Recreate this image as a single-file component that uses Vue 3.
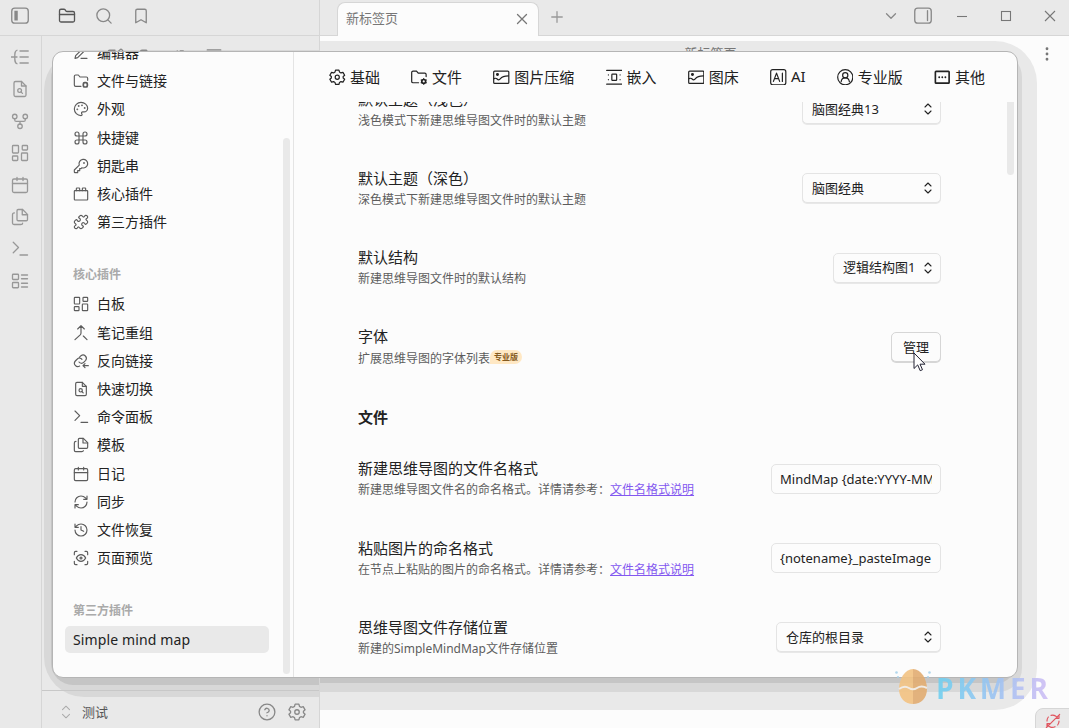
<template>
  <div class="app">
    <header class="titlebar">
      <div class="titlebar-left">
        <svg class="icon panel-icon" viewBox="0 0 24 24" v-html="icons.panelLeft"></svg>
        <svg class="icon active" viewBox="0 0 24 24" v-html="icons.folder"></svg>
        <svg class="icon" viewBox="0 0 24 24" v-html="icons.search"></svg>
        <svg class="icon" viewBox="0 0 24 24" v-html="icons.bookmark"></svg>
      </div>
      <div class="titlebar-tabs">
        <div class="tab">
          <span>新标签页</span>
          <svg class="icon" viewBox="0 0 24 24" v-html="icons.close"></svg>
        </div>
        <svg class="icon new-tab" viewBox="0 0 24 24" v-html="icons.plus"></svg>
        <div class="window-actions">
          <svg class="icon chevron" viewBox="0 0 24 24" v-html="icons.chevronDown"></svg>
          <svg class="icon panel-icon" viewBox="0 0 24 24" v-html="icons.panelRight"></svg>
          <svg class="win" viewBox="0 0 12 12"><path d="M1 6.500h10" /></svg>
          <svg class="win" viewBox="0 0 12 12"><rect x="1.500" y="1.500" width="9" height="9" /></svg>
          <svg class="win" viewBox="0 0 12 12"><path d="m1 1 10 10M11 1 1 11" /></svg>
        </div>
      </div>
    </header>

    <div class="workspace">
      <aside class="ribbon">
        <svg
          v-for="name in ribbonIcons"
          :key="name"
          class="icon"
          viewBox="0 0 24 24"
          v-html="icons[name]"
        ></svg>
      </aside>
      <section class="sidebar">
        <div class="shade shade-mid"></div>
        <div class="shade shade-dark"></div>
        <div class="sidebar-toolbar">
          <svg
            v-for="name in toolbarIcons"
            :key="name"
            class="icon"
            viewBox="0 0 24 24"
            v-html="icons[name]"
          ></svg>
        </div>
        <footer class="vault">
          <svg class="icon vault-switch" viewBox="0 0 24 24" v-html="icons.upDown"></svg>
          <span class="vault-name">测试</span>
          <svg class="icon" viewBox="0 0 24 24" v-html="icons.help"></svg>
          <svg class="icon" viewBox="0 0 24 24" v-html="icons.settings"></svg>
        </footer>
      </section>
      <main class="editor">
        <div class="shade shade-light"></div>
        <div class="shade shade-mid"></div>
        <div class="shade shade-dark"></div>
        <div class="view-title">新标签页</div>
        <svg class="icon more" viewBox="0 0 24 24" v-html="icons.more"></svg>
        <div class="status">
          <svg class="icon" viewBox="0 0 24 24" v-html="icons.syncOff"></svg>
        </div>
      </main>
    </div>

    <div class="modal">
      <nav class="modal-nav">
        <div class="nav-scroll">
          <div v-for="item in options" :key="item.label" class="nav-item">
            <svg class="icon" viewBox="0 0 24 24" v-html="icons[item.icon]"></svg>
            <span>{{ item.label }}</span>
          </div>
          <div class="nav-title">核心插件</div>
          <div v-for="item in corePlugins" :key="item.label" class="nav-item">
            <svg class="icon" viewBox="0 0 24 24" v-html="icons[item.icon]"></svg>
            <span>{{ item.label }}</span>
          </div>
          <div class="nav-title">第三方插件</div>
          <div class="nav-item selected">Simple mind map</div>
        </div>
        <div class="scrollbar nav-bar"></div>
      </nav>

      <div class="modal-content">
        <div class="setting-tabs">
          <div v-for="t in tabs" :key="t.label" class="setting-tab">
            <svg class="icon" viewBox="0 0 24 24" v-html="icons[t.icon]"></svg>
            <span>{{ t.label }}</span>
          </div>
        </div>
        <div class="setting-scroll">
          <div class="setting-list">
            <template v-for="row in settings" :key="row.name">
              <h3 v-if="row.type === 'heading'" class="setting-heading">{{ row.name }}</h3>
              <div v-else class="setting-item">
                <div class="setting-info">
                  <div class="setting-name">{{ row.name }}</div>
                  <div class="setting-desc" :class="{ 'has-badge': row.pro }">
                    {{ row.desc }}<a v-if="row.link">{{ row.link }}</a><span v-if="row.pro" class="badge">专业版</span>
                  </div>
                </div>
                <div v-if="row.type === 'select'" class="select" :style="{ width: row.width + 'px' }">
                  <span>{{ row.value }}</span>
                  <svg class="icon" viewBox="0 0 24 24" v-html="icons.upDown"></svg>
                </div>
                <div v-else-if="row.type === 'input'" class="input"><span>{{ row.value }}</span></div>
                <button v-else class="btn">{{ row.value }}</button>
              </div>
            </template>
          </div>
          <div class="scrollbar content-bar"></div>
        </div>
      </div>
    </div>

    <div class="watermark">
      <svg class="egg" viewBox="0 0 38 38">
        <path d="M19 1C11 1 5 11 5 21c0 9 6 15 14 15z" fill="#f3c383" />
        <path d="M19 1c8 0 14 10 14 20 0 9-6 15-14 15z" fill="#e2ad72" />
        <path
          d="M5 21c4-3 7-3 10-1s5 2 8 0 6-2 10 0"
          fill="none"
          stroke="#f4eee6"
          stroke-width="2"
        />
        <g fill="#a9d3ec">
          <circle cx="2.500" cy="4.500" r="1.300" />
          <circle cx="4" cy="9" r="1.100" />
          <circle cx="35.500" cy="4.500" r="1.300" />
          <circle cx="34" cy="9" r="1.100" />
        </g>
      </svg>
      <span>PKMER</span>
    </div>

    <svg class="cursor" viewBox="0 0 13 20">
      <path d="M1 1v15.500l3.700-3.600 2.500 5.800 2.300-1-2.500-5.500h5z" />
    </svg>
  </div>
</template>

<script setup>
const icons = {
  panelLeft: '<rect x="1" y="1.500" width="22" height="20" rx="4"/><rect x="4.500" y="5" width="4.500" height="13" fill="currentColor" stroke="none"/>',
  panelRight: '<rect x="1" y="1.500" width="22" height="20" rx="4"/><path d="M18 5v13"/>',
  folder: '<path d="M20 20a2 2 0 0 0 2-2V8a2 2 0 0 0-2-2h-7.900a2 2 0 0 1-1.690-.9L9.600 3.900A2 2 0 0 0 7.930 3H4a2 2 0 0 0-2 2v13a2 2 0 0 0 2 2Z"/><path d="M2 10h20"/>',
  search: '<circle cx="11" cy="11" r="8.500"/><path d="m21.500 21.500-4.300-4.300"/>',
  bookmark: '<path d="m19 21-7-4-7 4V5a2 2 0 0 1 2-2h10a2 2 0 0 1 2 2v16z"/>',
  close: '<path d="M18 6 6 18M6 6l12 12"/>',
  plus: '<path d="M5 12h14M12 5v14"/>',
  chevronDown: '<path d="m6 9 6 6 6-6"/>',
  mindmap: '<path d="M12 4h11M12 12h11M12 20h11M0 12h8M8 3c-3 1-3 4-3 9s0 8 3 9"/>',
  fileSearch: '<path d="M14 2H6a2 2 0 0 0-2 2v16a2 2 0 0 0 2 2h12a2 2 0 0 0 2-2V8z"/><path d="M14 2v6h6"/><circle cx="11.500" cy="14" r="2.500"/><path d="m13.300 15.800 2 2"/>',
  graph: '<circle cx="12" cy="19" r="3"/><circle cx="5" cy="6" r="3"/><circle cx="19" cy="6" r="3"/><path d="M5 9v1.500a2 2 0 0 0 2 2h10a2 2 0 0 0 2-2V9M12 12.500V16"/>',
  dashboard: '<rect width="8" height="10" x="2" y="2" rx="1"/><rect width="7" height="6" x="15" y="2" rx="1"/><rect width="8" height="10" x="14" y="12" rx="1"/><rect width="7" height="6" x="2" y="16" rx="1"/>',
  calendar: '<rect width="20" height="18" x="2" y="4" rx="2"/><path d="M16 2v4M8 2v4M2 10h20"/>',
  copy: '<path d="M15.500 2H9.600c-.900 0-1.600.7-1.600 1.600v11.800c0 .9.700 1.600 1.600 1.600h10.800c.900 0 1.600-.7 1.600-1.600V8.500L15.500 2z"/><path d="M15 2v7h7"/><path d="M4.500 6.500C3 6.500 2 7.500 2 9v11c0 1.200.8 2 2 2h9c1.500 0 2.500-.5 2.500-1.800"/>',
  terminal: '<path d="m3 17 7-7-7-7M12 20h10"/>',
  layoutList: '<rect width="8" height="7" x="2" y="3" rx="1"/><rect width="8" height="7" x="2" y="14" rx="1"/><path d="M14 4h8M14 9h8M14 15h8M14 20h8"/>',
  upDown: '<path d="m6 16 6 6 6-6M6 8l6-6 6 6"/>',
  help: '<circle cx="12" cy="12" r="10.500"/><path d="M9.090 9a3 3 0 0 1 5.830 1c0 2-3 3-3 3M12 17h.010"/>',
  settings: '<path d="M9.500 2.500h5l.8 3 2 1.200 3-.8 2.500 4.200-2.200 1.900v2l2.200 1.900-2.500 4.200-3-.8-2 1.200-.8 3h-5l-.8-3-2-1.200-3 .8L1.200 15.900 3.400 14v-2L1.200 10.100l2.500-4.200 3 .8 2-1.200z" transform="translate(0 -1)"/><circle cx="12" cy="12" r="3"/>',
  more: '<g fill="currentColor"><circle cx="12" cy="5" r="1"/><circle cx="12" cy="12" r="1"/><circle cx="12" cy="19" r="1"/></g>',
  syncOff: '<path d="M21 8V3M21 8h-5l3 0a9 9 0 0 0-10-4.500M3 12a9 9 0 0 1 2-6M3 16h5M3 16v5l0-4a9 9 0 0 0 12 3.500M21 12a9 9 0 0 1-2 6M22 2 2 22"/>',
  pencil: '<path d="M12 20h9"/><path d="M16.500 3.500a2.120 2.120 0 0 1 3 3L7 19l-4 1 1-4Z"/>',
  newFile: '<path d="M12 3H5a2 2 0 0 0-2 2v14a2 2 0 0 0 2 2h14a2 2 0 0 0 2-2v-7"/><path d="M18.500 2.500a2.100 2.100 0 0 1 3 3L12 15l-4 1 1-4Z"/>',
  folderPlus: '<path d="M20 20a2 2 0 0 0 2-2V8a2 2 0 0 0-2-2h-8L10 3H4a2 2 0 0 0-2 2v13a2 2 0 0 0 2 2ZM12 10v6M9 13h6"/>',
  sort: '<path d="m3 16 4 4 4-4M7 20V4M11 4h4M11 8h7M11 12h10"/>',
  gallery: '<path d="M3 2.500h18M3 21.500h18"/><rect width="18" height="12" x="3" y="6"/>',
  folderDot: '<path d="M12 20H4a2 2 0 0 1-2-2V5a2 2 0 0 1 2-2h4l2.500 3H20a2 2 0 0 1 2 2v3"/><rect x="15.500" y="14.500" width="6" height="6.500" rx="2" stroke-width="2.600"/>',
  folderCog: '<path d="M11 20H3a2 2 0 0 1-2-2V5a2 2 0 0 1 2-2h5l2.500 3H20a2 2 0 0 1 2 2v3"/><circle cx="18.500" cy="18" r="2.800" stroke-width="2.400"/><path d="M18.500 13.800v1.200M18.500 21v1.200M22.200 15.900l-1.100.6M15.900 19.500l-1.100.6M22.200 20.100l-1.100-.6M15.900 16.500l-1.100-.6"/>',
  palette: '<g fill="currentColor"><circle cx="13.500" cy="6.500" r=".5"/><circle cx="17.500" cy="10.500" r=".5"/><circle cx="8.500" cy="7.500" r=".5"/><circle cx="6.500" cy="12.500" r=".5"/></g><path d="M12 2C6.500 2 2 6.500 2 12s4.500 10 10 10c.926 0 1.648-.746 1.648-1.688 0-.437-.180-.835-.437-1.125-.290-.289-.438-.652-.438-1.125a1.640 1.640 0 0 1 1.668-1.668h1.996c3.051 0 5.555-2.503 5.555-5.554C21.965 6.012 17.461 2 12 2z"/>',
  command: '<path d="M15 6v12a3 3 0 1 0 3-3H6a3 3 0 1 0 3 3V6a3 3 0 1 0-3 3h12a3 3 0 1 0-3-3"/>',
  key: '<path d="M2 18v3c0 .6.400 1 1 1h4v-3h3v-3h2l1.400-1.400a6.500 6.500 0 1 0-4-4Z"/><circle cx="16.500" cy="7.500" r=".5" fill="currentColor"/>',
  toyBrick: '<rect width="20" height="14" x="2" y="7" rx="1"/><path d="M10 7V4c0-.6-.4-1-1-1H6a1 1 0 0 0-1 1v3M19 7V4c0-.6-.4-1-1-1h-3a1 1 0 0 0-1 1v3"/>',
  puzzle: '<path d="M19.439 7.850c-.049.322.059.648.289.878l1.568 1.568c.470.470.706 1.087.706 1.704s-.235 1.233-.706 1.704l-1.611 1.611a.980.980 0 0 1-.837.276c-.470-.070-.802-.480-.968-.925a2.501 2.501 0 1 0-3.214 3.214c.446.166.855.497.925.968a.979.979 0 0 1-.276.837l-1.610 1.610a2.404 2.404 0 0 1-1.705.707 2.402 2.402 0 0 1-1.704-.706l-1.568-1.568a1.026 1.026 0 0 0-.877-.290c-.493.074-.840.504-1.020.968a2.500 2.500 0 1 1-3.237-3.237c.464-.180.894-.527.967-1.020a1.026 1.026 0 0 0-.289-.877l-1.568-1.568A2.402 2.402 0 0 1 1.998 12c0-.617.236-1.234.706-1.704L4.230 8.770c.240-.240.581-.353.917-.303.515.077.877.528 1.073 1.010a2.500 2.500 0 1 0 3.259-3.259c-.482-.196-.933-.558-1.010-1.073-.050-.336.062-.676.303-.917l1.525-1.525A2.402 2.402 0 0 1 12 1.998c.617 0 1.234.236 1.704.706l1.568 1.568c.230.230.556.338.877.290.493-.074.840-.504 1.020-.968a2.500 2.500 0 1 1 3.237 3.237c-.464.180-.894.527-.967 1.020Z"/>',
  merge: '<path d="m7 6 5-5 5 5M12 1v11a4 4 0 0 1-1.200 2.800L3 22M21 22l-5.500-5.500"/>',
  backlink: '<path d="M9 13.500a4.500 4.500 0 0 0 7 .5l3-3a5 5 0 0 0-7-7L9.500 6.500"/><path d="M13.500 9.500a4.500 4.500 0 0 0-7-.5l-3 3a5 5 0 0 0 6.500 7.500"/><path d="M23 19h-8M18 16l-3 3 3 3"/>',
  sync: '<path d="M3 12a9 9 0 0 1 9-9 9.750 9.750 0 0 1 6.740 2.740L21 8M21 3v5h-5M21 12a9 9 0 0 1-9 9 9.750 9.750 0 0 1-6.740-2.740L3 16M8 16H3v5"/>',
  history: '<path d="M3 12a9 9 0 1 0 9-9 9.750 9.750 0 0 0-6.740 2.740L3 8M3 3v5h5M12 7v5l4 2"/>',
  scanEye: '<path d="M2 7V4a2 2 0 0 1 2-2h2M18 2h2a2 2 0 0 1 2 2v3M22 17v3a2 2 0 0 1-2 2h-2M6 22H4a2 2 0 0 1-2-2v-3M5 12s2.500-5 7-5 7 5 7 5-2.500 5-7 5-7-5-7-5"/><circle cx="12" cy="12" r="1.500"/>',
  image: '<rect width="22" height="18" x="1" y="3" rx="1.500"/><circle cx="6.500" cy="8" r="1.300" fill="currentColor"/><path d="M1.500 14c2-1 3-1 4.500.5s3 2 4.500 0S15 10 22.500 10"/>',
  embed: '<path d="M1 2h22M1 22h22"/><rect x="8.500" y="7.500" width="7" height="9" rx="1"/><path d="M3.500 8.500v.1M3.500 15.500v.1M20.500 8.500v.1M20.500 15.500v.1"/>',
  ai: '<rect x="1" y="1" width="22" height="22" rx="3"/><path d="m5 18 4.500-12L14 18M6.500 14h6M18 6v12"/>',
  user: '<circle cx="12" cy="12" r="11"/><circle cx="12" cy="9" r="3.800"/><path d="M6 18.500c.500-3.500 3-5.500 6-5.500s5.500 2 6 5.500"/>',
  other: '<rect x="2" y="3.500" width="20" height="17" rx="1" stroke-width="2.400"/><path d="M7.500 12h.1M12 12h.1M16.500 12h.1" stroke-width="2.600"/>'
}

const ribbonIcons = ['mindmap', 'fileSearch', 'graph', 'dashboard', 'calendar', 'copy', 'terminal', 'layoutList']
const toolbarIcons = ['newFile', 'folderPlus', 'sort', 'gallery', 'chevronDown']

const options = [
  { icon: 'pencil', label: '编辑器' },
  { icon: 'folderDot', label: '文件与链接' },
  { icon: 'palette', label: '外观' },
  { icon: 'command', label: '快捷键' },
  { icon: 'key', label: '钥匙串' },
  { icon: 'toyBrick', label: '核心插件' },
  { icon: 'puzzle', label: '第三方插件' }
]

const corePlugins = [
  { icon: 'dashboard', label: '白板' },
  { icon: 'merge', label: '笔记重组' },
  { icon: 'backlink', label: '反向链接' },
  { icon: 'fileSearch', label: '快速切换' },
  { icon: 'terminal', label: '命令面板' },
  { icon: 'copy', label: '模板' },
  { icon: 'calendar', label: '日记' },
  { icon: 'sync', label: '同步' },
  { icon: 'history', label: '文件恢复' },
  { icon: 'scanEye', label: '页面预览' }
]

const tabs = [
  { icon: 'settings', label: '基础' },
  { icon: 'folderCog', label: '文件' },
  { icon: 'image', label: '图片压缩' },
  { icon: 'embed', label: '嵌入' },
  { icon: 'image', label: '图床' },
  { icon: 'ai', label: 'AI' },
  { icon: 'user', label: '专业版' },
  { icon: 'other', label: '其他' }
]

const settings = [
  { type: 'select', name: '默认主题（浅色）', desc: '浅色模式下新建思维导图文件时的默认主题', value: '脑图经典13', width: 139 },
  { type: 'select', name: '默认主题（深色）', desc: '深色模式下新建思维导图文件时的默认主题', value: '脑图经典', width: 139 },
  { type: 'select', name: '默认结构', desc: '新建思维导图文件时的默认结构', value: '逻辑结构图1', width: 108 },
  { type: 'button', name: '字体', desc: '扩展思维导图的字体列表', pro: true, value: '管理' },
  { type: 'heading', name: '文件' },
  { type: 'input', name: '新建思维导图的文件名格式', desc: '新建思维导图文件名的命名格式。详情请参考：', link: '文件名格式说明', value: 'MindMap {date:YYYY-MM-DD}' },
  { type: 'input', name: '粘贴图片的命名格式', desc: '在节点上粘贴的图片的命名格式。详情请参考：', link: '文件名格式说明', value: '{notename}_pasteImage' },
  { type: 'select', name: '思维导图文件存储位置', desc: '新建的SimpleMindMap文件存储位置', value: '仓库的根目录', width: 165 }
]
</script>

<style>
body {
  overflow: hidden;
}
</style>

<style scoped>
.app {
  position: relative;
  display: flex;
  flex-direction: column;
  width: 1069px;
  height: 728px;
  overflow: hidden;
  background: #fcfcfc;
  color: #222;
  font-family: "Noto Sans", "Noto Sans CJK SC", sans-serif;
  font-size: 13px;
}

.app * {
  box-sizing: border-box;
}

.icon {
  flex: none;
  width: 18px;
  height: 18px;
  fill: none;
  stroke: currentColor;
  stroke-width: 1.75;
  stroke-linecap: round;
  stroke-linejoin: round;
}

.titlebar {
  display: flex;
  flex: none;
  height: 36px;
  background: #e9e9e9;
  border-bottom: 1px solid #d6d6d6;
  color: #888;
}

.titlebar-left {
  display: flex;
  align-items: center;
  width: 320px;
  height: 36px;
  padding: 0 0 4px 11px;
  border-right: 1px solid #d6d6d6;
}

.titlebar-left .icon {
  margin-right: 19px;
}

.titlebar-left .panel-icon {
  margin-right: 29px;
}

.titlebar-left .active {
  color: #555;
}

.titlebar-tabs {
  display: flex;
  flex: 1;
  align-items: center;
  height: 36px;
  padding-left: 17px;
}

.tab {
  display: flex;
  align-items: center;
  justify-content: space-between;
  align-self: flex-end;
  width: 202px;
  height: 34px;
  padding: 0 7px 4px 8px;
  background: #fcfcfc;
  border: 1px solid #d6d6d6;
  border-bottom: 0;
  border-radius: 8px 8px 0 0;
  color: #777;
}

.tab .icon {
  margin-top: 2px;
}

.new-tab {
  margin: 0 0 2px 9px;
  color: #999;
}

.window-actions {
  display: flex;
  align-items: center;
  margin-left: auto;
  padding: 0 13px 4px 0;
}

.window-actions .chevron {
  margin-right: 14px;
}

.window-actions .panel-icon {
  margin-right: 24px;
}

.win {
  width: 12px;
  height: 12px;
  margin-right: 32px;
  fill: none;
  stroke: #777;
  stroke-width: 1.1;
}

.win:last-child {
  margin-right: 0;
}

.workspace {
  display: flex;
  flex: 1;
  min-height: 0;
}

.ribbon {
  display: flex;
  flex-direction: column;
  align-items: center;
  gap: 14px;
  width: 42px;
  padding: 12px 1px 0 0;
  background: #e9e9e9;
  border-right: 1px solid #d6d6d6;
  color: #989898;
}

.sidebar {
  position: relative;
  display: flex;
  flex-direction: column;
  justify-content: space-between;
  width: 278px;
  overflow: hidden;
  background: #e9e9e9;
  border-right: 1px solid #d6d6d6;
  color: #888;
}

.sidebar-toolbar {
  position: relative;
  display: flex;
  justify-content: center;
  gap: 15px;
  padding: 12px 0 0;
}

.vault {
  position: relative;
  display: flex;
  align-items: center;
  height: 38px;
  padding: 5px 13px 0 17px;
  border-top: 1px solid #c8c8c8;
}

.vault-switch {
  width: 14px;
  height: 14px;
  color: #aaa;
}

.vault .icon + .icon {
  margin-left: 12px;
}

.vault-name {
  flex: 1;
  margin: -2px 0 0 9px;
  color: #555;
}

/* stepped shadow behind the settings window */
.shade {
  position: absolute;
}

.sidebar .shade-mid {
  top: 14px;
  left: 2px;
  right: -60px;
  bottom: 31px;
  background: #d8d8d8;
  border-radius: 40px;
}

.sidebar .shade-dark {
  top: 20px;
  left: 9px;
  right: -60px;
  bottom: 43px;
  background: #c5c5c5;
  border-radius: 22px;
}

.editor {
  position: relative;
  flex: 1;
  overflow: hidden;
  background: #fcfcfc;
}

.editor .shade-light {
  top: 5px;
  left: -60px;
  right: 32px;
  bottom: 18px;
  background: #e9e9e9;
  border-radius: 42px;
}

.editor .shade-mid {
  top: 17px;
  left: -60px;
  right: 47px;
  bottom: 36px;
  background: #d8d8d8;
  border-radius: 24px;
}

.editor .shade-dark {
  top: 24px;
  left: -60px;
  right: 54px;
  bottom: 45px;
  background: #c5c5c5;
  border-radius: 18px;
}

.view-title {
  position: relative;
  padding-top: 8px;
  padding-left: 32px;
  color: #777;
  line-height: 18px;
  text-align: center;
}

.more {
  position: absolute;
  top: 9px;
  right: 13px;
  color: #777;
}

.status {
  position: absolute;
  right: -1px;
  bottom: -1px;
  width: 35px;
  height: 21px;
  padding: 4px 0 0 9px;
  background: #e9e9e9;
  border: 1px solid #d6d6d6;
  border-radius: 8px 0 0 0;
  color: #e0555f;
}

.status .icon {
  width: 16px;
  height: 16px;
}

.modal {
  position: absolute;
  top: 51px;
  left: 52px;
  display: flex;
  width: 966px;
  height: 627px;
  overflow: hidden;
  background: #fcfcfc;
  border: 1px solid #b5b5b5;
  border-radius: 11px;
}

.modal-nav {
  position: relative;
  width: 241px;
  overflow: hidden;
  border-right: 1px solid #e4e4e4;
}

.nav-scroll {
  margin-top: -13px;
  padding: 0 24px 0 12px;
}

.nav-item {
  display: flex;
  align-items: center;
  gap: 8px;
  height: 28.200px;
  padding: 0 8px;
  border-radius: 5px;
  font-size: 14px;
  line-height: 20px;
}

.nav-item .icon {
  width: 16px;
  height: 16px;
  color: #5c5c5c;
}

.nav-item.selected {
  height: 27px;
  letter-spacing: 0.13px;
  background: #e9e9e9;
}

.nav-title {
  height: 54px;
  padding: 30px 8px 0;
  color: #aaa;
  font-size: 12px;
  font-weight: 600;
  line-height: 18px;
}

.scrollbar {
  position: absolute;
  width: 7px;
  background: #e9e9e9;
  border-radius: 4px;
}

.nav-bar {
  top: 86px;
  right: 3px;
  bottom: 3px;
}

.content-bar {
  top: 0;
  right: 3px;
  height: 73px;
  border-radius: 0 0 4px 4px;
}

.modal-content {
  display: flex;
  flex: 1;
  flex-direction: column;
}

.setting-tabs {
  display: flex;
  flex: none;
  gap: 31.300px;
  align-items: center;
  height: 50px;
  padding-left: 35px;
}

.setting-tab {
  display: flex;
  align-items: center;
  gap: 4.400px;
  font-size: 15px;
}

.setting-tab span {
  margin-top: -2px;
}

.setting-tab .icon {
  width: 16.500px;
  height: 16.500px;
}

.setting-scroll {
  position: relative;
  flex: 1;
  overflow: hidden;
}

.setting-list {
  margin-top: -32.500px;
  padding: 0 76px 0 64px;
}

.setting-item {
  display: flex;
  align-items: center;
  justify-content: space-between;
  height: 79.300px;
}

.setting-name {
  font-size: 15px;
  line-height: 22px;
}

.setting-desc {
  color: #5c5c5c;
  font-size: 12px;
  line-height: 21px;
}

.setting-desc.has-badge {
  line-height: 23px;
}

.setting-desc a {
  color: #8358f0;
  text-decoration: underline;
}

.badge {
  display: inline-block;
  height: 14px;
  padding: 0 4px;
  background: #ffe8c4;
  border-radius: 7px 7px 7px 0;
  color: #845a20;
  font-size: 8px;
  font-weight: 700;
  line-height: 14px;
  vertical-align: 3px;
}

.setting-heading {
  height: 52.500px;
  margin: 0;
  padding-top: 19px;
  font-size: 15px;
  font-weight: 700;
  line-height: 22px;
}

.select,
.input,
.btn {
  height: 30px;
  background: #fcfcfc;
  border: 1px solid #e4e4e4;
  border-radius: 5px;
  color: #222;
  font-family: inherit;
  font-size: 13px;
  line-height: 28px;
}

.select {
  display: flex;
  align-items: center;
  justify-content: space-between;
  padding: 0 6px 0 9px;
  box-shadow: 0 1px 0 0 #e8e8e8;
}

.select span {
  margin-top: -1px;
}

.select .icon {
  width: 12px;
  height: 12px;
  stroke-width: 2.2;
}

.input {
  width: 170px;
  padding: 0 8px;
}

.input span {
  display: block;
  overflow: hidden;
  white-space: nowrap;
}

.btn {
  width: 50px;
  padding: 0 0 1px;
  border-color: #d6d6d6;
  box-shadow: 0 1px 0 0 #d6d6d6;
}

.watermark {
  position: absolute;
  top: 667px;
  left: 894px;
  display: flex;
  align-items: center;
  opacity: 0.9;
}

.egg {
  width: 38px;
  height: 38px;
}

.watermark span {
  margin: 3px 0 0 4px;
  background: linear-gradient(90deg, #6fd0f0, #9cc4f2 50%, #d3bdf5);
  background-clip: text;
  color: transparent;
  font-family: "Open Sans", sans-serif;
  font-size: 28px;
  font-weight: 700;
  letter-spacing: 3.800px;
  line-height: 36px;
}

.cursor {
  position: absolute;
  top: 352px;
  left: 913px;
  width: 13px;
  height: 20px;
  fill: #fff;
  stroke: #223;
  stroke-width: 1;
}
</style>
